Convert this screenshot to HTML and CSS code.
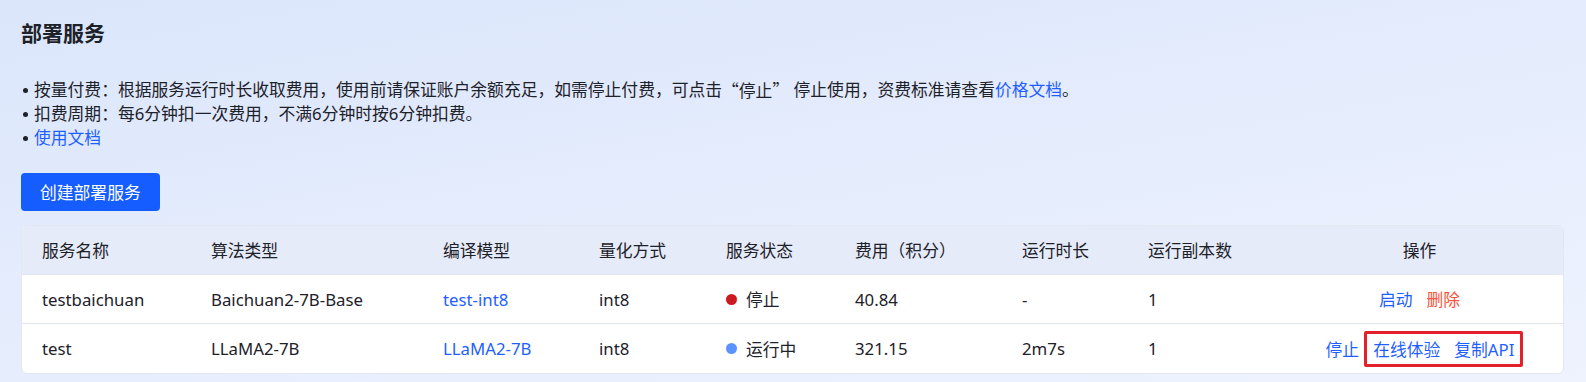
FILE: index.html
```html
<!DOCTYPE html>
<html lang="zh-CN">
<head>
<meta charset="utf-8">
<title>部署服务</title>
<link rel="stylesheet" href="styles.css">
</head>
<body>
<div class="page">
  <h1 class="title">部署服务</h1>
  <ul class="notes">
    <li>按量付费：根据服务运行时长收取费用，使用前请保证账户余额充足，如需停止付费，可点击<span class="cjk">“停止”</span> 停止使用，资费标准请查看<a class="link" href="#">价格文档</a>。</li>
    <li>扣费周期：每6分钟扣一次费用，不满6分钟时按6分钟扣费。</li>
    <li><a class="link" href="#">使用文档</a></li>
  </ul>
  <button class="btn-primary" type="button">创建部署服务</button>
  <div class="table">
    <div class="row head">
      <div class="cell">服务名称</div>
      <div class="cell">算法类型</div>
      <div class="cell">编译模型</div>
      <div class="cell">量化方式</div>
      <div class="cell">服务状态</div>
      <div class="cell">费用（积分）</div>
      <div class="cell">运行时长</div>
      <div class="cell">运行副本数</div>
      <div class="cell ops">操作</div>
    </div>
    <div class="row">
      <div class="cell">testbaichuan</div>
      <div class="cell">Baichuan2-7B-Base</div>
      <div class="cell"><a class="link" href="#">test-int8</a></div>
      <div class="cell">int8</div>
      <div class="cell"><span class="dot dot-stop"></span>停止</div>
      <div class="cell">40.84</div>
      <div class="cell">-</div>
      <div class="cell">1</div>
      <div class="cell ops">
        <a class="link" href="#">启动</a>
        <a class="link danger" href="#">删除</a>
      </div>
    </div>
    <div class="row last">
      <div class="cell">test</div>
      <div class="cell">LLaMA2-7B</div>
      <div class="cell"><a class="link" href="#">LLaMA2-7B</a></div>
      <div class="cell">int8</div>
      <div class="cell"><span class="dot dot-run"></span>运行中</div>
      <div class="cell">321.15</div>
      <div class="cell">2m7s</div>
      <div class="cell">1</div>
      <div class="cell ops">
        <a class="link" href="#">停止</a>
        <span class="highlight">
          <a class="link" href="#">在线体验</a>
          <a class="link" href="#">复制API</a>
        </span>
      </div>
    </div>
  </div>
</div>
</body>
</html>
```

FILE: styles.css
```css
* { box-sizing: border-box; }

html, body {
  margin: 0;
  height: 100%;
}

body {
  background: linear-gradient(170deg, #dbe6fb 0%, #e6edfd 55%, #eef3fe 100%);
  font-family: "Noto Sans", "Noto Sans CJK SC", sans-serif;
  color: #1d2129;
  font-size: 16.8px;
  overflow: hidden;
}

.page {
  padding: 18px 22px 0 21px;
  display: flex;
  flex-direction: column;
  align-items: flex-start;
}

.title {
  margin: 0;
  font-size: 21px;
  line-height: 30px;
  font-weight: 700;
  color: #1d2129;
}

.notes {
  margin: 30px 0 0;
  padding: 0;
  list-style: none;
  line-height: 24.2px;
}

.notes li {
  display: flex;
  align-items: flex-start;
  white-space: pre;
}

.notes li::before {
  content: "";
  flex: none;
  width: 5px;
  height: 5px;
  border-radius: 50%;
  background: #1d2129;
  margin: 10px 6px 0 2px;
}

.cjk {
  font-family: "Noto Sans CJK SC", sans-serif;
}

.link {
  color: #1f5fff;
  text-decoration: none;
}

.link.danger {
  color: #f5533d;
}

.btn-primary {
  margin-top: 22.4px;
  height: 38px;
  padding: 0 19px;
  border: none;
  border-radius: 4px;
  background: #165dff;
  color: #fff;
  font-family: inherit;
  font-size: 16.8px;
  cursor: pointer;
}

.table {
  margin-top: 14px;
  align-self: stretch;
  background: #fff;
  border: 1px solid #e3e7ef;
  border-radius: 6px;
  overflow: hidden;
}

.row {
  display: grid;
  grid-template-columns: 169px 232px 156px 127px 129px 167px 126px 148px 1fr;
  align-items: center;
  height: 49px;
  border-bottom: 1px solid #e3e7ef;
}

.row.last {
  border-bottom: none;
}

.row.head {
  background: #e5ebf8;
}

.cell {
  padding-left: 20px;
  white-space: nowrap;
  display: flex;
  align-items: center;
}

.cell.ops {
  padding-left: 0;
  justify-content: center;
  gap: 14px;
}

.dot {
  width: 11px;
  height: 11px;
  border-radius: 50%;
  margin-right: 9px;
  flex: none;
}

.dot-stop { background: #cb1b21; }
.dot-run { background: #5b93ff; }

.highlight {
  display: flex;
  gap: 14px;
  align-items: center;
  padding: 3px 6px 3px 6px;
  margin: -6px -10px -6px -9px;
  border: 3px solid #e3202b;
  border-radius: 2px;
}
```
